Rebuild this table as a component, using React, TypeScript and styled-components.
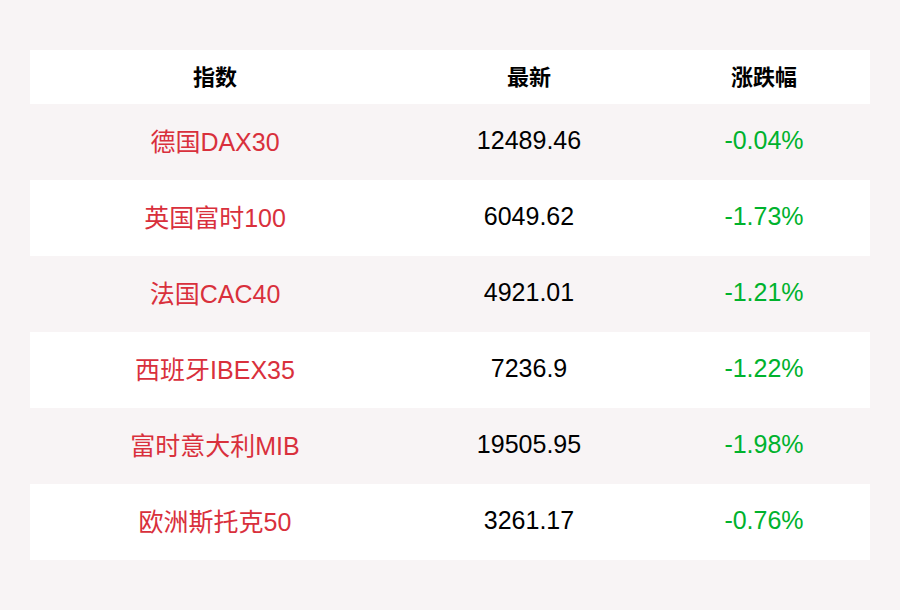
import React from 'react';
import styled, { createGlobalStyle } from 'styled-components';

const GlobalStyle = createGlobalStyle`
  html, body {
    margin: 0;
    padding: 0;
    background: #f8f4f5;
  }
  body {
    font-family: "Liberation Sans", Arial, "Noto Sans CJK SC", sans-serif;
  }
`;

const Page = styled.div`
  width: 900px;
  height: 610px;
  padding: 50px 30px 0;
  box-sizing: border-box;
  background: #f8f4f5;
`;

const Table = styled.div`
  display: grid;
  grid-template-columns: 370px 258px 212px;
`;

const HeaderCell = styled.div`
  height: 54px;
  box-sizing: border-box;
  padding-bottom: 5px;
  background: #ffffff;
  display: flex;
  align-items: center;
  justify-content: center;
  font-size: 22px;
  font-weight: bold;
  color: #000;
  font-family: "Noto Sans CJK SC", "Liberation Sans", sans-serif;
`;

const Cell = styled.div<{ $striped: boolean; $tone: 'name' | 'value' | 'change' }>`
  height: 76px;
  box-sizing: border-box;
  padding-bottom: 4px;
  background: ${({ $striped }) => ($striped ? '#ffffff' : '#f8f4f5')};
  display: flex;
  align-items: center;
  justify-content: center;
  font-size: 25px;
  color: ${({ $tone }) =>
    $tone === 'name' ? '#d9303c' : $tone === 'change' ? '#00b22d' : '#000000'};
  font-family: "Liberation Sans", "Noto Sans CJK SC", sans-serif;
`;

const rows = [
  { name: '德国DAX30', value: '12489.46', change: '-0.04%' },
  { name: '英国富时100', value: '6049.62', change: '-1.73%' },
  { name: '法国CAC40', value: '4921.01', change: '-1.21%' },
  { name: '西班牙IBEX35', value: '7236.9', change: '-1.22%' },
  { name: '富时意大利MIB', value: '19505.95', change: '-1.98%' },
  { name: '欧洲斯托克50', value: '3261.17', change: '-0.76%' },
];

export default function App() {
  return (
    <>
      <GlobalStyle />
      <Page>
        <Table>
          <HeaderCell>指数</HeaderCell>
          <HeaderCell>最新</HeaderCell>
          <HeaderCell>涨跌幅</HeaderCell>
          {rows.map((row, i) => (
            <React.Fragment key={row.name}>
              <Cell $striped={i % 2 === 1} $tone="name">{row.name}</Cell>
              <Cell $striped={i % 2 === 1} $tone="value">{row.value}</Cell>
              <Cell $striped={i % 2 === 1} $tone="change">{row.change}</Cell>
            </React.Fragment>
          ))}
        </Table>
      </Page>
    </>
  );
}
